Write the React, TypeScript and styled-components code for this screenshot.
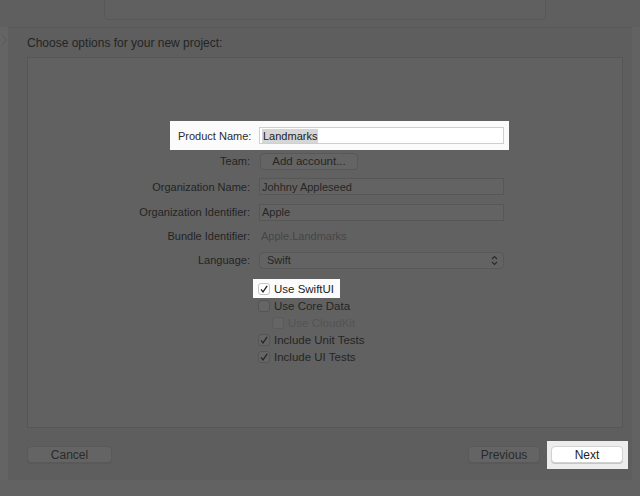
import { createGlobalStyle, styled } from "styled-components";

const Global = createGlobalStyle`
  html, body {
    margin: 0;
    padding: 0;
    background: #626262;
  }
  body {
    font-family: "Liberation Sans", Arial, sans-serif;
    font-size: 11px;
    color: #252525;
  }
`;

export default function App() {
  return (
    <Page>
      <Global />
      <TopStrip>
        <BackTab />
      </TopStrip>
      <Middle>
        <Gutter>
          <svg width="8" height="14" viewBox="0 0 8 14">
            <path d="M2 2 L6 7 L2 12" fill="none" stroke="#585858" strokeWidth="1" />
          </svg>
        </Gutter>
        <Sheet>
          <Heading>Choose options for your new project:</Heading>
          <Panel>
            <Form>
              <Row $spot>
                <Label $spot>Product Name:</Label>
                <Field $light>
                  <Selected>Landmarks</Selected>
                </Field>
              </Row>
              <Row>
                <Label>Team:</Label>
                <SmallButton>Add account...</SmallButton>
              </Row>
              <Row>
                <Label>Organization Name:</Label>
                <Field>Johhny Appleseed</Field>
              </Row>
              <Row>
                <Label>Organization Identifier:</Label>
                <Field>Apple</Field>
              </Row>
              <Row $short>
                <Label>Bundle Identifier:</Label>
                <Value>Apple.Landmarks</Value>
              </Row>
              <Row>
                <Label>Language:</Label>
                <Popup>
                  Swift
                  <svg width="7" height="11" viewBox="0 0 7 11">
                    <path
                      d="M1 4 L3.5 1.5 L6 4 M1 7 L3.5 9.5 L6 7"
                      fill="none"
                      stroke="#2a2a2a"
                      strokeWidth="1.1"
                    />
                  </svg>
                </Popup>
              </Row>
            </Form>
            <Checks>
              <CheckRow $spot>
                <Box $checked $light>
                  <Tick color="#222" />
                </Box>
                Use SwiftUI
              </CheckRow>
              <CheckRow>
                <Box />
                Use Core Data
              </CheckRow>
              <CheckRow $indent $disabled>
                <Box $disabled />
                Use CloudKit
              </CheckRow>
              <CheckRow>
                <Box $checked>
                  <Tick color="#262626" />
                </Box>
                Include Unit Tests
              </CheckRow>
              <CheckRow>
                <Box $checked>
                  <Tick color="#262626" />
                </Box>
                Include UI Tests
              </CheckRow>
            </Checks>
          </Panel>
          <Footer>
            <Button $width={85}>Cancel</Button>
            <Spacer />
            <Button $width={72}>Previous</Button>
            <NextSpot>
              <Button $width={72} $light>
                Next
              </Button>
            </NextSpot>
          </Footer>
        </Sheet>
      </Middle>
    </Page>
  );
}

function Tick({ color }: { color: string }) {
  return (
    <svg width="10" height="10" viewBox="0 0 10 10">
      <path d="M2 5.3 L4 7.8 L8.2 1.8" fill="none" stroke={color} strokeWidth="1.3" />
    </svg>
  );
}

const Page = styled.div`
  width: 640px;
  height: 496px;
  overflow: hidden;
  display: flex;
  flex-direction: column;
  background: #626262;
`;

const TopStrip = styled.div`
  height: 27px;
  flex: 0 0 27px;
  padding-left: 104px;
  box-sizing: border-box;
  background: #5f5f5f;
`;

const BackTab = styled.div`
  width: 442px;
  height: 20px;
  box-sizing: border-box;
  border: 1px solid #585858;
  border-top: none;
  border-radius: 0 0 5px 5px;
  background: #606060;
`;

const Middle = styled.div`
  display: flex;
  flex: 0 0 453px;
`;

const Gutter = styled.div`
  width: 8px;
  padding-top: 6px;
  background: #646464;
`;

const Sheet = styled.div`
  width: 624px;
  display: flex;
  flex-direction: column;
  box-sizing: border-box;
  padding: 0 9px 0 19px;
  background: #5e5e5e;
  border-top: 1px solid #585858;
`;

const Heading = styled.div`
  font-size: 12px;
  line-height: 13px;
  padding: 9px 0 7px;
  color: #242424;
`;

const Panel = styled.div`
  height: 371px;
  box-sizing: border-box;
  border: 1px solid #565656;
  background: #616161;
`;

const Form = styled.div`
  display: flex;
  flex-direction: column;
  gap: 8.5px;
  padding-top: 69px;
`;

const Row = styled.div<{ $spot?: boolean; $short?: boolean }>`
  display: flex;
  align-items: center;
  height: ${(p) => (p.$short ? 14 : 17)}px;
  ${(p) =>
    p.$spot &&
    `
    width: fit-content;
    background: #fbfbfb;
    padding: 6px 5px 6px 8px;
    margin: -6px 0 -6px 142px;
  `}
`;

const Label = styled.div<{ $spot?: boolean }>`
  width: ${(p) => (p.$spot ? 72 : 222)}px;
  margin-right: 9px;
  text-align: right;
  white-space: nowrap;
  color: ${(p) => (p.$spot ? "#2b2b2b" : "#242424")};
`;

const Field = styled.div<{ $light?: boolean }>`
  width: 245px;
  height: 17px;
  box-sizing: border-box;
  display: flex;
  align-items: center;
  padding-left: 2px;
  border: 1px solid ${(p) => (p.$light ? "#cfcfcf" : "#575757")};
  background: ${(p) => (p.$light ? "#ffffff" : "#636363")};
  color: #262626;
`;

const Selected = styled.span`
  background: #d6d6d6;
  color: #222;
  padding: 1px 1px;
`;

const SmallButton = styled.div`
  width: 98px;
  height: 17px;
  box-sizing: border-box;
  margin-left: 1px;
  display: flex;
  align-items: center;
  justify-content: center;
  border: 1px solid #585858;
  border-radius: 4px;
  background: #646464;
  font-size: 11.5px;
  color: #262626;
`;

const Value = styled.div`
  padding-left: 2px;
  color: #464646;
`;

const Popup = styled.div`
  width: 245px;
  height: 17px;
  box-sizing: border-box;
  display: flex;
  align-items: center;
  justify-content: space-between;
  padding: 0 5px 0 7px;
  border: 1px solid #585858;
  border-radius: 4px;
  background: #636363;
  color: #262626;
`;

const Checks = styled.div`
  display: flex;
  flex-direction: column;
  padding: 11.5px 0 0 230px;
`;

const CheckRow = styled.div<{ $spot?: boolean; $indent?: boolean; $disabled?: boolean }>`
  display: flex;
  align-items: center;
  gap: 4px;
  height: 17px;
  font-size: 11.5px;
  color: ${(p) => (p.$disabled ? "#545454" : "#252525")};
  margin-left: ${(p) => (p.$indent ? 14 : 0)}px;
  ${(p) =>
    p.$spot &&
    `
    width: fit-content;
    background: #fbfbfb;
    padding: 1px 6px 1px 5px;
    margin: -1px 0 -1px -5px;
    color: #222;
  `}
`;

const Box = styled.div<{ $checked?: boolean; $light?: boolean; $disabled?: boolean }>`
  width: 12px;
  height: 12px;
  box-sizing: border-box;
  display: flex;
  align-items: center;
  justify-content: center;
  border-radius: 3px;
  border: 1px solid ${(p) => (p.$light ? "#c4c4c4" : p.$disabled ? "#5a5a5a" : "#555555")};
  background: ${(p) => (p.$light ? "#ffffff" : "#656565")};
`;

const Footer = styled.div`
  display: flex;
  align-items: center;
  padding-top: 18px;
`;

const Spacer = styled.div`
  flex: 1;
`;

const Button = styled.div<{ $width: number; $light?: boolean }>`
  width: ${(p) => p.$width}px;
  height: 17px;
  box-sizing: border-box;
  display: flex;
  align-items: center;
  justify-content: center;
  border-radius: 4px;
  font-size: 12px;
  border: 1px solid ${(p) => (p.$light ? "#d2d2d2" : "#595959")};
  background: ${(p) => (p.$light ? "#ffffff" : "#646464")};
  box-shadow: 0 1px 0 ${(p) => (p.$light ? "#c6c6c6" : "#585858")};
  color: ${(p) => (p.$light ? "#222" : "#2a2a2a")};
`;

const NextSpot = styled.div`
  display: flex;
  background: #ececec;
  padding: 5px 5px 6px 4px;
  margin: -5px -5px -6px 7px;
`;
